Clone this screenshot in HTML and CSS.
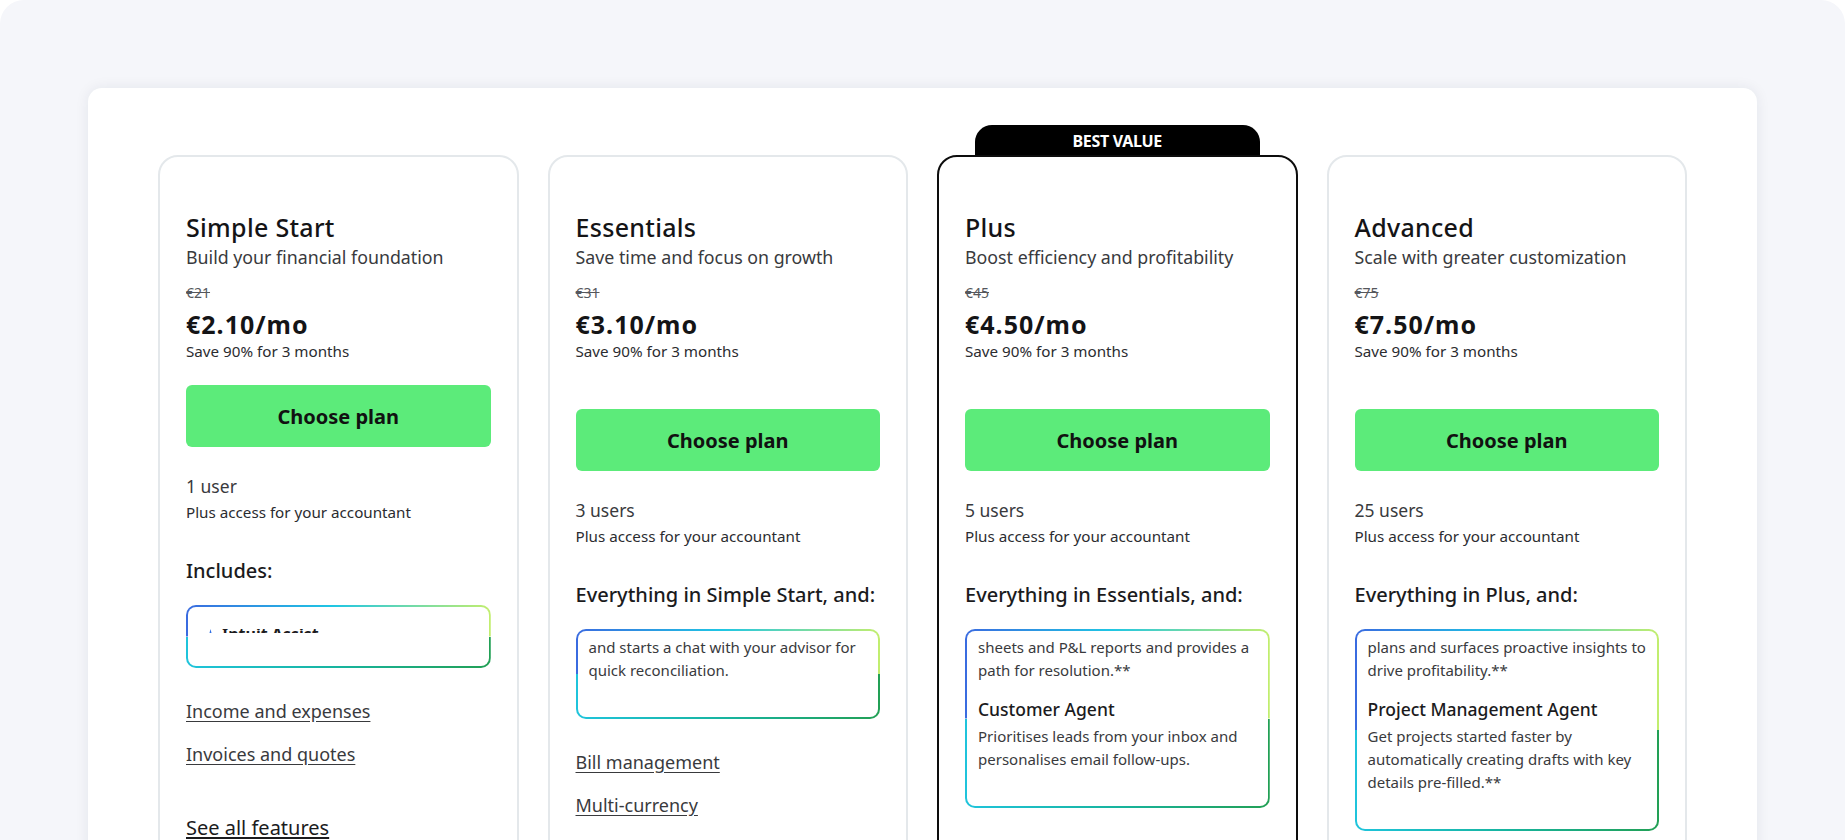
FILE: index.html
```html
<!DOCTYPE html>
<html lang="en">
<head>
<meta charset="utf-8">
<title>Plans</title>
<link rel="stylesheet" href="styles.css">
</head>
<body>
<div class="page">
  <div class="panel">
    <div class="plans">

      <div class="card card--compact">
        <h2 class="plan-name">Simple Start</h2>
        <p class="plan-tag">Build your financial foundation</p>
        <p class="old-price">€21</p>
        <p class="price">€2.10/mo</p>
        <p class="save">Save 90% for 3 months</p>
        <button class="btn">Choose plan</button>
        <p class="users">1 user</p>
        <p class="users-note">Plus access for your accountant</p>
        <h3 class="incl">Includes:</h3>
        <div class="assist">
          <div class="assist-peek">
            <div class="assist-peek-line">
              <svg class="assist-icon" viewBox="0 0 16 16" width="15" height="15"><path d="M8 0 L9.6 6.4 L16 8 L9.6 9.6 L8 16 L6.4 9.6 L0 8 L6.4 6.4 Z" fill="#2f6fe4"/></svg>
              <span>Intuit Assist</span>
            </div>
          </div>
        </div>
        <a class="feat" href="#">Income and expenses</a>
        <a class="feat" href="#">Invoices and quotes</a>
        <a class="all" href="#">See all features</a>
      </div>

      <div class="card">
        <h2 class="plan-name">Essentials</h2>
        <p class="plan-tag">Save time and focus on growth</p>
        <p class="old-price">€31</p>
        <p class="price">€3.10/mo</p>
        <p class="save">Save 90% for 3 months</p>
        <button class="btn">Choose plan</button>
        <p class="users">3 users</p>
        <p class="users-note">Plus access for your accountant</p>
        <h3 class="incl">Everything in Simple Start, and:</h3>
        <div class="assist">
          <p class="assist-text">and starts a chat with your advisor for quick reconciliation.</p>
        </div>
        <a class="feat" href="#">Bill management</a>
        <a class="feat" href="#">Multi-currency</a>
        <a class="all" href="#">See all features</a>
      </div>

      <div class="card card--best">
        <div class="badge">BEST VALUE</div>
        <h2 class="plan-name">Plus</h2>
        <p class="plan-tag">Boost efficiency and profitability</p>
        <p class="old-price">€45</p>
        <p class="price">€4.50/mo</p>
        <p class="save">Save 90% for 3 months</p>
        <button class="btn">Choose plan</button>
        <p class="users">5 users</p>
        <p class="users-note">Plus access for your accountant</p>
        <h3 class="incl">Everything in Essentials, and:</h3>
        <div class="assist">
          <p class="assist-text">sheets and P&amp;L reports and provides a path for resolution.**</p>
          <h4 class="agent">Customer Agent</h4>
          <p class="assist-text">Prioritises leads from your inbox and personalises email follow-ups.</p>
        </div>
        <a class="feat" href="#">Project profitability</a>
        <a class="all" href="#">See all features</a>
      </div>

      <div class="card">
        <h2 class="plan-name">Advanced</h2>
        <p class="plan-tag">Scale with greater customization</p>
        <p class="old-price">€75</p>
        <p class="price">€7.50/mo</p>
        <p class="save">Save 90% for 3 months</p>
        <button class="btn">Choose plan</button>
        <p class="users">25 users</p>
        <p class="users-note">Plus access for your accountant</p>
        <h3 class="incl">Everything in Plus, and:</h3>
        <div class="assist">
          <p class="assist-text">plans and surfaces proactive insights to drive profitability.**</p>
          <h4 class="agent">Project Management Agent</h4>
          <p class="assist-text">Get projects started faster by automatically creating drafts with key details pre-filled.**</p>
        </div>
        <a class="feat" href="#">Custom reporting</a>
        <a class="all" href="#">See all features</a>
      </div>

    </div>
  </div>
</div>
</body>
</html>
```
FILE: styles.css
```css
* { box-sizing: border-box; }

html, body {
  margin: 0;
  height: 100%;
  overflow: hidden;
  background: #ffffff;
}

body {
  font-family: "Noto Sans", "Open Sans", sans-serif;
  color: #1b1b1d;
}

.page {
  height: 840px;
  overflow: hidden;
  background: #f5f6fa;
  border-radius: 24px 24px 0 0;
  padding: 88px 88px 0;
}

.panel {
  background: #ffffff;
  border-radius: 14px;
  box-shadow: 0 0 14px rgba(30, 40, 70, 0.08);
  padding: 67px 70px 60px;
}

.plans {
  display: flex;
  gap: 29px;
  align-items: flex-start;
}

.card {
  flex: 1 1 0;
  min-width: 0;
  position: relative;
  border: 2px solid #e4e8eb;
  border-radius: 20px;
  padding: 55px 26px 40px;
  display: flex;
  flex-direction: column;
  align-items: flex-start;
}

.card--best {
  border-color: #0d0d0d;
}

.badge {
  position: absolute;
  top: -32px;
  left: 50%;
  width: 285px;
  margin-left: -142.5px;
  height: 30px;
  background: #000;
  color: #fff;
  border-radius: 17px 17px 0 0;
  text-align: center;
  font-weight: 700;
  font-size: 16px;
  letter-spacing: -0.3px;
  line-height: 30px;
  padding-top: 1px;
}

.card p, .card h2, .card h3, .card h4 { margin: 0; }

.plan-name {
  font-size: 25px;
  font-weight: 500;
  line-height: 30px;
  letter-spacing: 0.3px;
  color: #141416;
}

.plan-tag {
  margin-top: 3px !important;
  font-size: 17.8px;
  line-height: 24px;
  color: #393a3d;
}

.old-price {
  margin-top: 14px !important;
  font-size: 14px;
  line-height: 20px;
  color: #55575c;
  text-decoration: line-through;
}

.price {
  margin-top: 6px !important;
  font-size: 25px;
  font-weight: 700;
  line-height: 30px;
  letter-spacing: 1px;
  color: #141416;
}

.save {
  margin-top: 2px !important;
  font-size: 15.2px;
  line-height: 20px;
  color: #2b2c30;
}

.btn {
  align-self: stretch;
  margin-top: 48px;
  height: 62px;
  border: 0;
  border-radius: 6px;
  background: #5ceb7a;
  color: #111;
  font-family: inherit;
  font-size: 20px;
  font-weight: 700;
  cursor: pointer;
}

.card--compact .btn { margin-top: 24px; }

.users {
  margin-top: 27px !important;
  font-size: 17.5px;
  line-height: 24px;
  color: #393a3d;
}

.users-note {
  margin-top: 4px !important;
  font-size: 15.2px;
  line-height: 20px;
  color: #2b2c30;
}

.incl {
  margin-top: 35px !important;
  font-size: 20px;
  font-weight: 500;
  line-height: 28px;
  white-space: nowrap;
  color: #1b1b1d;
}

.assist {
  align-self: stretch;
  margin-top: 20px;
  border: 2px solid transparent;
  border-radius: 10px;
  padding: 5px 8px 35px 11px;
  overflow: hidden;
  background:
    linear-gradient(#fff, #fff) padding-box,
    linear-gradient(90deg, #3a6be0 0%, #1fc6e4 48%, #c2ee6e 100%) top / 100% 50% no-repeat border-box,
    linear-gradient(90deg, #1fc4dc 0%, #17b49e 50%, #22a055 100%) bottom / 100% 50% no-repeat border-box;
}

.card--compact .assist { padding-bottom: 33px; }

.assist-peek {
  margin-top: 17px;
  height: 4px;
  overflow: hidden;
}

.assist-peek-line {
  margin-top: -5px;
  display: flex;
  align-items: center;
  gap: 4px;
  font-size: 16px;
  font-weight: 700;
  line-height: 20px;
  color: #1b1b1d;
  margin-left: 4px;
}

.assist-icon { display: block; margin-top: 4px; }

.assist-text {
  font-size: 15px;
  line-height: 23px;
  color: #393a3d;
}

.agent {
  margin-top: 15px !important;
  font-size: 17.5px;
  font-weight: 500;
  line-height: 24px;
  color: #1b1b1d;
}

.agent + .assist-text { margin-top: 4px; }

.feat {
  margin-top: 19px;
  font-size: 18px;
  line-height: 24px;
  color: #393a3d;
  text-decoration: underline;
  text-underline-offset: 3px;
}

.assist + .feat { margin-top: 31px; }

.all {
  margin-top: 49px;
  font-size: 20px;
  line-height: 26px;
  color: #1b1b1d;
  text-decoration: underline;
  text-underline-offset: 2px;
}
```
